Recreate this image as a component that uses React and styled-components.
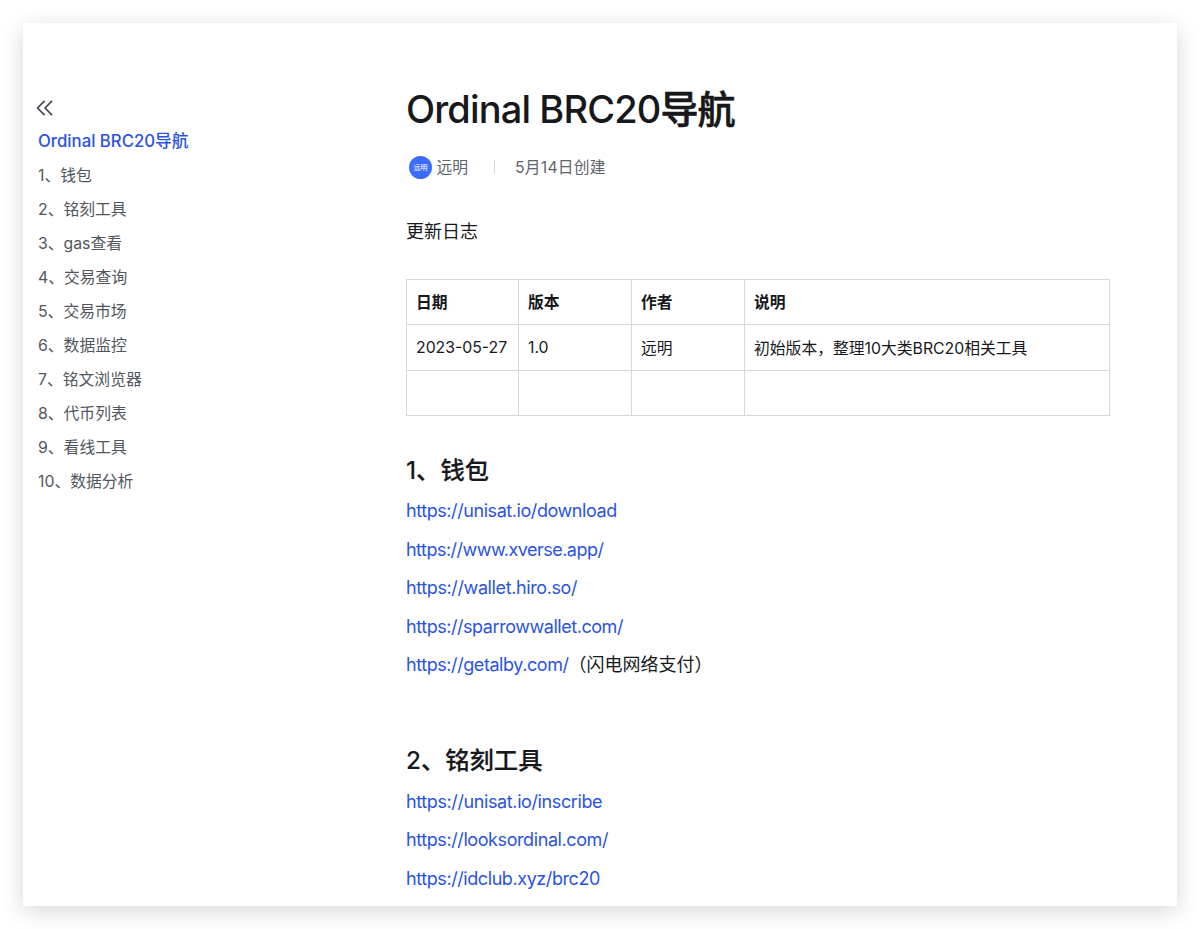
import React from 'react';
import styled, { createGlobalStyle } from 'styled-components';

const GlobalStyle = createGlobalStyle`
  * {
    box-sizing: border-box;
  }
  body {
    margin: 0;
    background: #ffffff;
    color: #17181c;
    font-family: Inter, 'Noto Sans CJK SC', sans-serif;
  }
`;

const Desktop = styled.div`
  width: 1200px;
  height: 929px;
  padding: 23px;
  overflow: hidden;
`;

const Window = styled.div`
  display: flex;
  width: 1154px;
  height: 883px;
  overflow: hidden;
  background: #ffffff;
  box-shadow: 0 5px 22px rgba(0, 0, 0, 0.16);
`;

const Sidebar = styled.nav`
  display: flex;
  flex-direction: column;
  width: 383px;
  padding: 76px 0 0 15px;
`;

const Collapse = styled.svg`
  width: 18px;
  height: 18px;
  margin: 0 0 8px -2px;
  fill: none;
  stroke: #44484f;
  stroke-width: 1.7;
`;

const NavItem = styled.a`
  height: 34px;
  line-height: ${props => (props.$active ? 32 : 34)}px;
  font-size: ${props => (props.$active ? 16.75 : 15.8)}px;
  white-space: nowrap;
  font-weight: ${props => (props.$active ? 500 : 400)};
  color: ${props => (props.$active ? '#2a53e4' : '#51565d')};
`;

const Doc = styled.main`
  width: 703px;
  padding-top: 58px;
`;

const Title = styled.h1`
  height: 56px;
  margin: 0;
  line-height: 56px;
  font-size: 38px;
  font-weight: 500;
  letter-spacing: -0.87px;
  white-space: nowrap;
`;

// medium weight for the Chinese part, which has only regular and bold faces
const Cjk = styled.span`
  -webkit-text-stroke: ${props => props.$stroke}px currentColor;
`;

const Meta = styled.div`
  display: flex;
  align-items: center;
  height: 24px;
  margin-top: 18px;
  padding-left: 3px;
  font-size: 15.8px;
  color: #5f646c;
`;

const MetaText = styled.span`
  padding-top: 2px;
  line-height: 24px;
  letter-spacing: ${props => props.$spacing || 0}px;
`;

const Avatar = styled.span`
  width: 23px;
  height: 23px;
  margin-right: 4.5px;
  border-radius: 50%;
  line-height: 23px;
  text-align: center;
  font-size: 7px;
  color: #ffffff;
  background: #3b6cff;
`;

const Divider = styled.span`
  width: 1px;
  height: 14px;
  margin: 0 20px 0 26px;
  background: #d5d7db;
`;

const Paragraph = styled.p`
  height: 28px;
  margin: 39px 0 0;
  line-height: 28px;
  font-size: 18px;
`;

const Table = styled.table`
  width: 704px;
  margin: 33px 0 0;
  border-collapse: collapse;
  table-layout: fixed;
  font-size: 15.8px;
`;

const Row = styled.tr`
  height: ${props => props.$height}px;
`;

const Cell = styled.td`
  padding: 0 9px;
  border: 1px solid #d5d8dd;
  text-align: left;
  white-space: nowrap;
`;

const HeadCell = styled(Cell)`
  padding-bottom: 2px;
  font-weight: 600;
`;

const Heading = styled.h2`
  height: 36px;
  margin: ${props => props.$top}px 0 0;
  line-height: 36px;
  font-size: 24.3px;
  font-weight: 500;
`;

const LinkList = styled.div`
  display: flex;
  flex-direction: column;
  padding-top: ${props => props.$gap}px;
`;

const LinkLine = styled.div`
  height: 38.5px;
  line-height: 38.5px;
  font-size: 18px;
  white-space: nowrap;
`;

const Link = styled.a`
  color: #2a53e4;
  letter-spacing: ${props => props.$spacing}px;
`;

const NAV = [
  '1、钱包',
  '2、铭刻工具',
  '3、gas查看',
  '4、交易查询',
  '5、交易市场',
  '6、数据监控',
  '7、铭文浏览器',
  '8、代币列表',
  '9、看线工具',
  '10、数据分析',
];

const WALLETS = [
  { url: 'https://unisat.io/download', spacing: -0.43 },
  { url: 'https://www.xverse.app/', spacing: -0.52 },
  { url: 'https://wallet.hiro.so/', spacing: -0.39 },
  { url: 'https://sparrowwallet.com/', spacing: -0.45 },
  { url: 'https://getalby.com/', spacing: -0.43, note: '（闪电网络支付）' },
];

const INSCRIBE = [
  { url: 'https://unisat.io/inscribe', spacing: -0.39 },
  { url: 'https://looksordinal.com/', spacing: -0.41 },
  { url: 'https://idclub.xyz/brc20', spacing: -0.42 },
];

const Section = ({ top, gap, number, title, links }) => (
  <section>
    <Heading $top={top}>
      {number}
      <Cjk $stroke={0.2}>、{title}</Cjk>
    </Heading>
    <LinkList $gap={gap}>
      {links.map(({ url, note, spacing }) => (
        <LinkLine key={url}>
          <Link $spacing={spacing}>{url}</Link>
          {note}
        </LinkLine>
      ))}
    </LinkList>
  </section>
);

const App = () => (
  <>
    <GlobalStyle />
    <Desktop lang="zh-CN">
      <Window>
        <Sidebar>
          <Collapse viewBox="0 0 18 18">
            <path d="M8.5 1.8 1.6 9l6.9 7.2M16 1.8 9.1 9l6.9 7.2" />
          </Collapse>
          <NavItem $active>Ordinal BRC20导航</NavItem>
          {NAV.map(text => (
            <NavItem key={text}>{text}</NavItem>
          ))}
        </Sidebar>
        <Doc>
          <Title>
            Ordinal BRC20<Cjk $stroke={0.6}>导航</Cjk>
          </Title>
          <Meta>
            <Avatar>远明</Avatar>
            <MetaText>远明</MetaText>
            <Divider />
            <MetaText $spacing={0.15}>5月14日创建</MetaText>
          </Meta>
          <Paragraph>更新日志</Paragraph>
          <Table>
            <colgroup>
              <col width="112" />
              <col width="113" />
              <col width="113" />
              <col />
            </colgroup>
            <tbody>
              <Row $height={45}>
                <HeadCell as="th">日期</HeadCell>
                <HeadCell as="th">版本</HeadCell>
                <HeadCell as="th">作者</HeadCell>
                <HeadCell as="th">说明</HeadCell>
              </Row>
              <Row $height={46}>
                <Cell>2023-05-27</Cell>
                <Cell>1.0</Cell>
                <Cell>远明</Cell>
                <Cell>初始版本，整理10大类BRC20相关工具</Cell>
              </Row>
              <Row $height={45}>
                <Cell />
                <Cell />
                <Cell />
                <Cell />
              </Row>
            </tbody>
          </Table>
          <Section top={36} gap={4.4} number="1" title="钱包" links={WALLETS} />
          <Section top={57.1} gap={5} number="2" title="铭刻工具" links={INSCRIBE} />
        </Doc>
      </Window>
    </Desktop>
  </>
);

export default App;
